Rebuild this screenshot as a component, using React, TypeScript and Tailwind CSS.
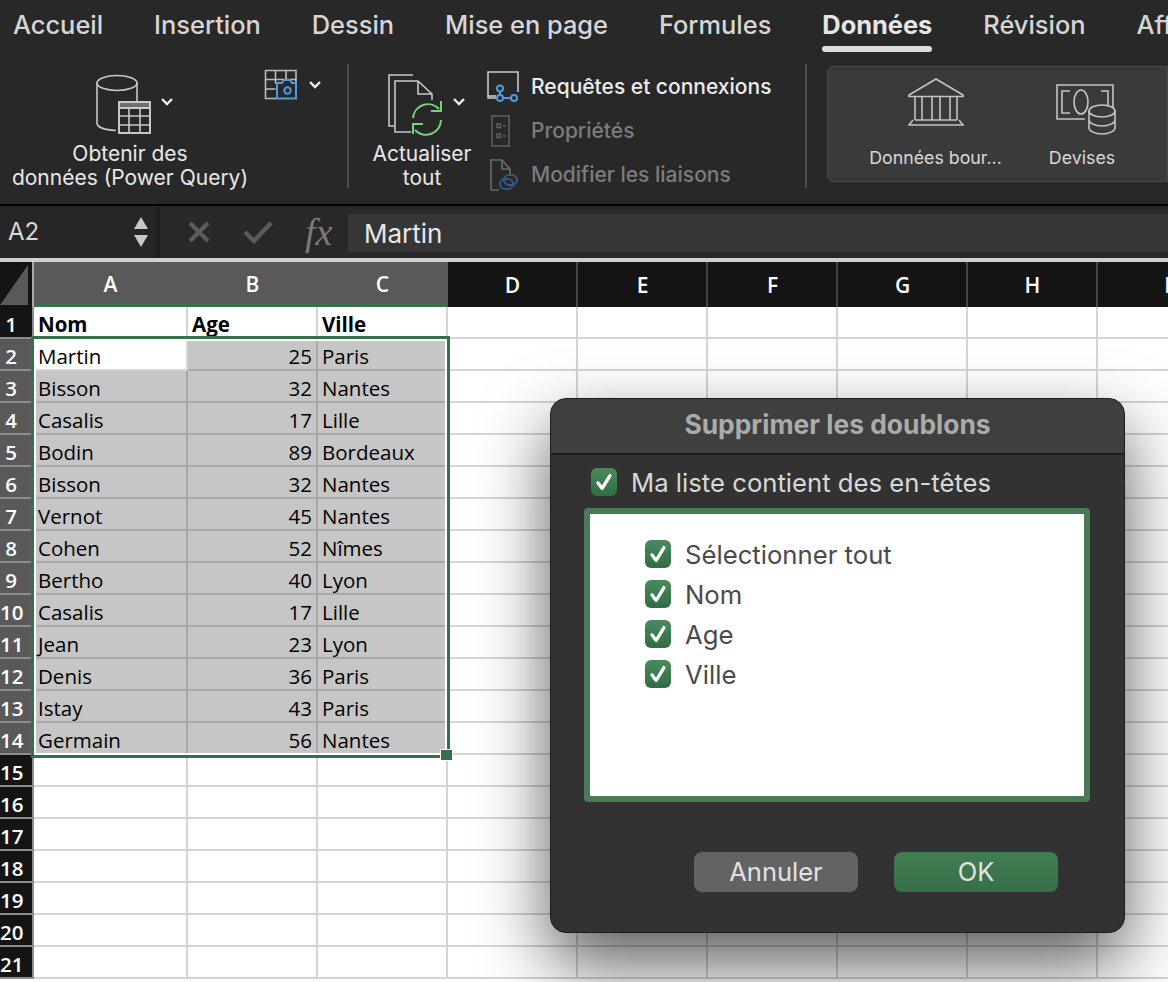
const UI = "font-['Inter','Liberation_Sans',sans-serif]";
const CELL = "font-['Open_Sans','Noto_Sans',sans-serif]";

const COLS = [
  { name: "A", w: "w-[154px]", sel: true },
  { name: "B", w: "w-[130px]", sel: true },
  { name: "C", w: "w-[130px]", sel: true },
  { name: "D", w: "w-[130px]", sel: false },
  { name: "E", w: "w-[130px]", sel: false },
  { name: "F", w: "w-[130px]", sel: false },
  { name: "G", w: "w-[130px]", sel: false },
  { name: "H", w: "w-[130px]", sel: false },
  { name: "I", w: "w-[140px]", sel: false },
];

const DATA: [string, string, string][] = [
  ["Nom", "Age", "Ville"],
  ["Martin", "25", "Paris"],
  ["Bisson", "32", "Nantes"],
  ["Casalis", "17", "Lille"],
  ["Bodin", "89", "Bordeaux"],
  ["Bisson", "32", "Nantes"],
  ["Vernot", "45", "Nantes"],
  ["Cohen", "52", "Nîmes"],
  ["Bertho", "40", "Lyon"],
  ["Casalis", "17", "Lille"],
  ["Jean", "23", "Lyon"],
  ["Denis", "36", "Paris"],
  ["Istay", "43", "Paris"],
  ["Germain", "56", "Nantes"],
];

const ROWS = Array.from({ length: 21 }, (_, i) => i + 1);

function Chevron() {
  return (
    <svg width="14" height="10" viewBox="0 0 14 10" fill="none" stroke="#f0f0f0" strokeWidth="2.4">
      <path d="M2 2l5 5 5-5" />
    </svg>
  );
}

function Check() {
  return (
    <div className="w-[26px] h-[28px] rounded-[6px] bg-gradient-to-b from-[#4a8a5c] to-[#2f6e45] flex items-center justify-center shrink-0">
      <svg width="22" height="22" viewBox="0 0 24 24" fill="none" stroke="#fff" strokeWidth="3.6" strokeLinecap="round" strokeLinejoin="round">
        <path d="M5.5 13l4.5 6L18.5 5" />
      </svg>
    </div>
  );
}

function Tab({ label, active }: { label: string; active?: boolean }) {
  return (
    <div className={`relative shrink-0 ${active ? "font-bold text-[#e6e6e6]" : "font-medium text-[#d6d6d6]"}`}>
      {label}
      {active && <div className="absolute left-0 right-0 top-[37px] h-[6px] rounded-full bg-[#dcdcdc]" />}
    </div>
  );
}

function DbIcon() {
  return (
    <svg width="56" height="62" viewBox="0 0 56 62" fill="none" stroke="#c8c8c8" strokeWidth="1.6">
      <ellipse cx="21" cy="9" rx="20" ry="7.5" />
      <path d="M1 9v40c0 4 7 7 19 7.5M41 9v18" />
      <rect x="23" y="28" width="31" height="31" fill="#282828" strokeWidth="2" />
      <rect x="23" y="28" width="31" height="6" fill="#6e6e6e" stroke="#c8c8c8" strokeWidth="2" />
      <path d="M33 34v25M44 34v25M23 42h31M23 51h31" />
    </svg>
  );
}

function CameraTable() {
  return (
    <svg width="34" height="32" viewBox="0 0 34 32" fill="none" strokeWidth="1.6">
      <path stroke="#bdbdbd" d="M32 13V1.500H1.500v28H12M11.500 1.500v13M22 1.500v9M1.500 10.500h30M1.500 20h10" />
      <path stroke="#4f9bdc" strokeWidth="2" d="M13 14h5l2-3h6l2 3h4v15.500H13z" />
      <circle cx="23.500" cy="21.500" r="3.200" stroke="#4f9bdc" strokeWidth="2" />
    </svg>
  );
}

function RefreshIcon() {
  return (
    <svg width="56" height="62" viewBox="0 0 56 62" fill="none" stroke="#c8c8c8" strokeWidth="1.6">
      <path d="M25 1H1v51h5" />
      <path d="M30 7H7v51h16M30 7v13h14M30 7l14 13v6" />
      <path stroke="#79d07f" strokeWidth="2" d="M25 44a15 15 0 0 1 26-9M53 46a15 15 0 0 1-26 10" />
      <path stroke="#79d07f" strokeWidth="2" d="M53 27v10H43M25 60V50h10" />
    </svg>
  );
}

function QueryIcon() {
  return (
    <svg width="34" height="32" viewBox="0 0 34 32" fill="none" strokeWidth="1.6">
      <path stroke="#c8c8c8" d="M11 27H1V1h30v20" />
      <path stroke="#c8c8c8" d="M1 25h8" />
      <circle cx="13" cy="17.500" r="3" stroke="#4f9bdc" strokeWidth="2" />
      <circle cx="13" cy="27" r="3" stroke="#4f9bdc" strokeWidth="2" />
      <circle cx="27" cy="27" r="3" stroke="#4f9bdc" strokeWidth="2" />
      <path stroke="#4f9bdc" strokeWidth="2" d="M13 20.500V24M16 27h8" />
    </svg>
  );
}

function PropsIcon() {
  return (
    <svg width="34" height="32" viewBox="0 0 34 32" fill="none" stroke="#5e5e5e" strokeWidth="1.6">
      <rect x="5" y="1" width="17" height="30" />
      <rect x="10" y="9" width="3.500" height="3.500" />
      <rect x="10" y="19" width="3.500" height="3.500" />
      <path d="M16 11h3M16 21h3" />
    </svg>
  );
}

function LinksIcon() {
  return (
    <svg width="34" height="32" viewBox="0 0 34 32" fill="none" strokeWidth="1.6">
      <path stroke="#6a6a6a" d="M15 1H4v30h8M15 1v9h8M15 1l8 9v5" />
      <rect x="13" y="20" width="13" height="10" rx="5" stroke="#34587e" strokeWidth="2" />
      <rect x="17" y="16" width="13" height="10" rx="5" stroke="#34587e" strokeWidth="2" />
    </svg>
  );
}

function BankIcon() {
  return (
    <svg width="56" height="48" viewBox="0 0 56 48" fill="none" stroke="#c4c4c4" strokeWidth="1.6">
      <path d="M28 1L1 17v1.500h54V17z" />
      <path d="M7 19v23M14 19v23M24 19v23M32 19v23M42 19v23M49 19v23M7 42h42M5 42L1 47h54l-4-5" />
    </svg>
  );
}

function CashIcon() {
  return (
    <svg width="62" height="52" viewBox="0 0 62 52" fill="none" stroke="#c4c4c4" strokeWidth="1.6">
      <path d="M30 36H2V2h56v24" />
      <path d="M15 8H7v22h8M46 8h7v16" />
      <ellipse cx="26" cy="19" rx="7" ry="12" />
      <ellipse cx="47" cy="28" rx="13" ry="6" fill="#3a3a3a" />
      <path d="M34 28v17c0 3 6 6 13 6s13-3 13-6V28M34 37c0 3 6 6 13 6s13-3 13-6" />
    </svg>
  );
}

function GroupSeparator() {
  return <div className="w-[2px] h-[124px] bg-[#4c4c4c] shrink-0" />;
}

function Ribbon() {
  return (
    <div className={`${UI} h-[204px] bg-[#282828] overflow-hidden`}>
      <div className="h-[64px] pl-[13px] pt-[9px] flex gap-[51px] text-[25.400px] leading-[32px] whitespace-nowrap">
        <Tab label="Accueil" />
        <Tab label="Insertion" />
        <Tab label="Dessin" />
        <Tab label="Mise en page" />
        <Tab label="Formules" />
        <Tab label="Données" active />
        <Tab label="Révision" />
        <Tab label="Affichage" />
      </div>
      <div className="flex items-start">
        {/* Obtenir des données */}
        <div className="w-[347px] h-[124px] flex shrink-0">
          <div className="w-[260px] flex flex-col items-center">
            <div className="h-[78px] shrink-0 pt-[10px] pl-[10px] flex items-start gap-[8px]">
              <DbIcon />
              <div className="mt-[23px]"><Chevron /></div>
            </div>
            <div className="text-[21px] leading-[24px] text-[#e8e8e8] text-center whitespace-nowrap">
              Obtenir des
              <br />
              données (Power Query)
            </div>
          </div>
          <div className="pl-[4px] pt-[5px] flex items-start gap-[10px]">
            <CameraTable />
            <div className="mt-[11px]"><Chevron /></div>
          </div>
        </div>
        <GroupSeparator />
        {/* Actualiser */}
        <div className="w-[456px] h-[124px] flex shrink-0">
          <div className="w-[146px] -mr-[8px] shrink-0 flex flex-col items-center">
            <div className="h-[78px] shrink-0 pt-[10px] pl-[10px] flex items-start gap-[8px]">
              <RefreshIcon />
              <div className="mt-[23px]"><Chevron /></div>
            </div>
            <div className="text-[21px] leading-[24px] text-[#e8e8e8] text-center">
              Actualiser
              <br />
              tout
            </div>
          </div>
          <div className="pt-[7px] flex flex-col gap-[12px] text-[21px] leading-[32px] whitespace-nowrap">
            <div className="flex items-center gap-[10px] text-[#ececec] font-medium">
              <QueryIcon />
              Requêtes et connexions
            </div>
            <div className="flex items-center gap-[10px] text-[#7c7c7c] font-medium">
              <PropsIcon />
              Propriétés
            </div>
            <div className="flex items-center gap-[10px] text-[#7c7c7c] font-medium">
              <LinksIcon />
              Modifier les liaisons
            </div>
          </div>
        </div>
        <GroupSeparator />
        {/* Types de données */}
        <div className="ml-[20px] mt-[2px] h-[116px] flex-1 rounded-l-[6px] bg-[#3a3a3a] border border-[#4a4a4a] flex text-[17.800px] text-[#d8d8d8]">
          <div className="w-[215px] shrink-0 flex flex-col items-center pt-[11px]">
            <div className="h-[48px]"><BankIcon /></div>
            <div className="mt-[20px] leading-[24px] whitespace-nowrap">Données bour...</div>
          </div>
          <div className="w-[80px] shrink-0 flex flex-col items-center pt-[16px]">
            <div className="h-[52px] pl-[5px]"><CashIcon /></div>
            <div className="mt-[11px] leading-[24px] -ml-[2px]">Devises</div>
          </div>
        </div>
      </div>
    </div>
  );
}

function FormulaBar() {
  return (
    <div className={`${UI} h-[52px] bg-[#282828] flex`}>
      <div className="w-[156px] shrink-0 bg-[#262626] flex items-center justify-between pl-[8px] pr-[8px] text-[24px] text-[#d8d8d8]">
        A2
        <div className="flex flex-col gap-[6px]">
          <div className="w-0 h-0 border-x-[7px] border-x-transparent border-b-[12px] border-b-[#c8c8c8]" />
          <div className="w-0 h-0 border-x-[7px] border-x-transparent border-t-[12px] border-t-[#c8c8c8]" />
        </div>
      </div>
      <div className="w-[4px] shrink-0 bg-[#1f1f1f]" />
      <div className="flex items-center shrink-0 w-[188px] pl-[28px]">
        <svg width="22" height="22" viewBox="0 0 22 22" fill="none" stroke="#5a5a5a" strokeWidth="4.500">
          <path d="M2 2l18 18M20 2L2 20" />
        </svg>
        <svg className="ml-[33px]" width="30" height="24" viewBox="0 0 30 24" fill="none" stroke="#5a5a5a" strokeWidth="4.500">
          <path d="M2 12l9 9L28 3" />
        </svg>
        <span className="ml-[32px] font-['Liberation_Serif',serif] italic text-[38px] leading-none text-[#7a7a7a]">fx</span>
      </div>
      <div className="flex-1 mt-[8px] mb-[6px] bg-[#363636] flex items-center pl-[16px] text-[26px] text-[#e8e8e8]">
        Martin
      </div>
    </div>
  );
}

function Sheet() {
  return (
    <div className={`${CELL} relative`}>
      {/* column headers */}
      <div className="h-[45px] flex bg-[#141414]">
        <div className="w-[34px] shrink-0 border-r-2 border-[#a8a8a8] relative overflow-hidden">
          <div className="absolute left-0 top-[3px] w-[28px] h-[40px] bg-[#595959] [clip-path:polygon(100%_0,100%_100%,0_100%)]" />
        </div>
        {COLS.map((c) => (
          <div
            key={c.name}
            className={`${c.w} shrink-0 flex items-center justify-center pt-[3px] pl-[1px] text-[21px] font-semibold text-white border-r-2 ${
              c.sel ? "bg-[#595959] border-[#595959] border-b-[3px] border-b-[#35704a]" : "border-[#444]"
            }`}
          >
            {c.name}
          </div>
        ))}
      </div>
      {/* rows */}
      {ROWS.map((r) => {
        const row = DATA[r - 1];
        const selected = r >= 2 && r <= 14;
        return (
          <div key={r} className="h-[32px] flex">
            <div className={`w-[34px] shrink-0 border-r-2 border-b-2 border-[#8c8c8c] pr-[10px] text-center text-[20.500px] leading-[34px] font-semibold text-white whitespace-nowrap ${selected ? "bg-[#595959]" : "bg-[#141414]"}`}>
              {r}
            </div>
            {COLS.map((c, i) => {
              const value = row && i < 3 ? row[i] : "";
              const filled = selected && i < 3 && !(r === 2 && i === 0);
              const right = i === 1 && r > 1;
              return (
                <div
                  key={c.name}
                  className={`${c.w} shrink-0 border-r-2 border-b-2 px-[4px] text-[20.500px] leading-[34px] whitespace-nowrap text-black ${
                    filled ? "bg-[#c6c6c6] border-[#a9a9a9]" : "bg-white border-[#d4d4d4]"
                  } ${right ? "text-right" : ""} ${r === 1 ? "font-bold" : ""}`}
                >
                  {value}
                </div>
              );
            })}
          </div>
        );
      })}
      {/* selection frame */}
      <div className="absolute left-[31px] top-[74px] w-[419px] h-[422px] border-[3px] border-[#35704a] shadow-[inset_0_0_0_2px_#fff]" />
      <div className="absolute left-[441px] top-[488px] w-[11px] h-[10px] bg-[#35704a] outline outline-1 outline-white" />
    </div>
  );
}

function Dialog() {
  return (
    <div className={`${UI} absolute left-[550px] top-[398px] w-[575px] h-[535px] rounded-[16px] bg-[#323232] border border-[#1c1c1c] shadow-[0_30px_70px_rgba(0,0,0,0.65)] flex flex-col overflow-hidden`}>
      <div className="h-[56px] shrink-0 bg-[#3e403f] border-b-2 border-[#1e1e1e] flex items-center justify-center pb-[2px] text-[26.400px] font-bold text-[#ababab]">
        Supprimer les doublons
      </div>
      <div className="flex items-center gap-[14px] ml-[40px] mt-[13px] text-[25.700px] leading-[26px] text-[#d8d8d8]">
        <Check />
        <span className="pt-[2px]">Ma liste contient des en-têtes</span>
      </div>
      <div className="ml-[33px] mt-[12px] w-[506px] h-[294px] shrink-0 rounded-[4px] border-[6px] border-[#4a7a55] bg-white pl-[55px] pt-[26px] flex flex-col gap-[12px] text-[25.700px] leading-[26px] text-[#4a4a4a]">
        {["Sélectionner tout", "Nom", "Age", "Ville"].map((label) => (
          <div key={label} className="flex items-center gap-[14px]">
            <Check />
            <span className="pt-[2px]">{label}</span>
          </div>
        ))}
      </div>
      <div className="ml-[143px] mt-[50px] flex gap-[36px] text-[25.500px]">
        <div className="w-[164px] h-[40px] rounded-[8px] bg-[#636363] flex items-center justify-center text-[#e2e2e2]">Annuler</div>
        <div className="w-[164px] h-[40px] rounded-[8px] bg-gradient-to-b from-[#437d53] to-[#376f48] flex items-center justify-center text-[#e2e2e2]">OK</div>
      </div>
    </div>
  );
}

export default function App() {
  return (
    <div className="relative w-[1168px] h-[982px] overflow-hidden bg-white">
      <Ribbon />
      <div className="h-[2px] bg-black" />
      <FormulaBar />
      <div className="h-[4px] bg-[#cfcfcf]" />
      <Sheet />
      <Dialog />
    </div>
  );
}
